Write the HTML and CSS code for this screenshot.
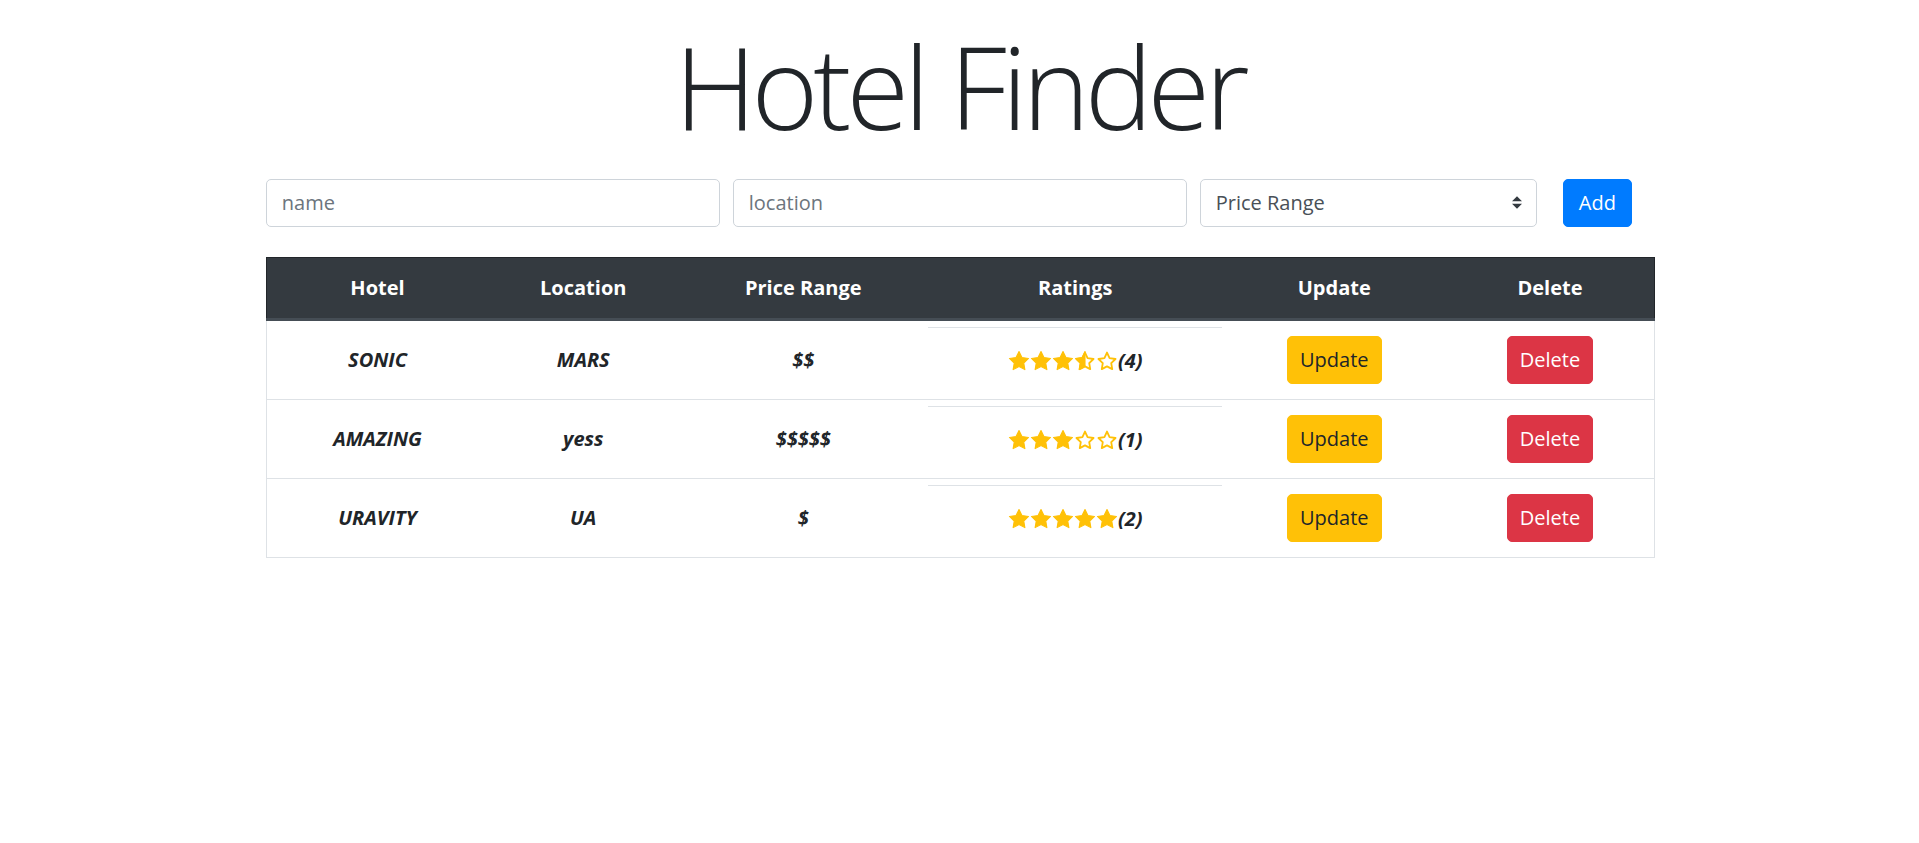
FILE: index.html
```html
<!DOCTYPE html>
<html lang="en">
<head>
<meta charset="utf-8">
<title>Hotel Finder</title>
<link rel="stylesheet" href="styles.css">
</head>
<body>
<div class="container">
  <h1 class="title">Hotel Finder</h1>
  <form class="add-form">
    <input class="field" type="text" placeholder="name">
    <input class="field" type="text" placeholder="location">
    <div class="select-wrap">
      <select class="field select">
        <option>Price Range</option>
        <option>$</option>
        <option>$$</option>
        <option>$$$</option>
        <option>$$$$</option>
        <option>$$$$$</option>
      </select>
      <svg class="select-arrow" viewBox="0 0 4 5" width="10" height="13"><path fill="#343a40" d="M2 0L0 2h4zm0 5L0 3h4z"/></svg>
    </div>
    <button type="button" class="btn btn-primary">Add</button>
  </form>

  <table class="hotels">
    <colgroup>
      <col class="c-hotel"><col class="c-loc"><col class="c-price"><col class="c-rate"><col class="c-upd"><col class="c-del">
    </colgroup>
    <thead>
      <tr><th>Hotel</th><th>Location</th><th>Price Range</th><th>Ratings</th><th>Update</th><th>Delete</th></tr>
    </thead>
    <tbody>
      <tr>
        <td class="em">SONIC</td>
        <td class="em">MARS</td>
        <td class="em">$$</td>
        <td class="rating"><span class="stars">
          <svg class="star" viewBox="0 0 24 24"><polygon class="full" points="12,1.6 15.2,8.2 22.4,9.2 17.2,14.2 18.4,21.4 12,18 5.6,21.4 6.8,14.2 1.6,9.2 8.8,8.2"/></svg>
          <svg class="star" viewBox="0 0 24 24"><polygon class="full" points="12,1.6 15.2,8.2 22.4,9.2 17.2,14.2 18.4,21.4 12,18 5.6,21.4 6.8,14.2 1.6,9.2 8.8,8.2"/></svg>
          <svg class="star" viewBox="0 0 24 24"><polygon class="full" points="12,1.6 15.2,8.2 22.4,9.2 17.2,14.2 18.4,21.4 12,18 5.6,21.4 6.8,14.2 1.6,9.2 8.8,8.2"/></svg>
          <svg class="star" viewBox="0 0 24 24"><polygon class="full" points="12,1.6 12,18 5.6,21.4 6.8,14.2 1.6,9.2 8.8,8.2"/><polygon class="empty" points="12,2.8 14.8,8.9 21.3,9.8 16.6,14.4 17.7,20.9 12,17.9 6.3,20.9 7.4,14.4 2.7,9.8 9.2,8.9"/></svg>
          <svg class="star" viewBox="0 0 24 24"><polygon class="empty" points="12,2.8 14.8,8.9 21.3,9.8 16.6,14.4 17.7,20.9 12,17.9 6.3,20.9 7.4,14.4 2.7,9.8 9.2,8.9"/></svg>
        </span><span class="count">(4)</span></td>
        <td><button type="button" class="btn btn-warning">Update</button></td>
        <td><button type="button" class="btn btn-danger">Delete</button></td>
      </tr>
      <tr>
        <td class="em">AMAZING</td>
        <td class="em">yess</td>
        <td class="em">$$$$$</td>
        <td class="rating"><span class="stars">
          <svg class="star" viewBox="0 0 24 24"><polygon class="full" points="12,1.6 15.2,8.2 22.4,9.2 17.2,14.2 18.4,21.4 12,18 5.6,21.4 6.8,14.2 1.6,9.2 8.8,8.2"/></svg>
          <svg class="star" viewBox="0 0 24 24"><polygon class="full" points="12,1.6 15.2,8.2 22.4,9.2 17.2,14.2 18.4,21.4 12,18 5.6,21.4 6.8,14.2 1.6,9.2 8.8,8.2"/></svg>
          <svg class="star" viewBox="0 0 24 24"><polygon class="full" points="12,1.6 15.2,8.2 22.4,9.2 17.2,14.2 18.4,21.4 12,18 5.6,21.4 6.8,14.2 1.6,9.2 8.8,8.2"/></svg>
          <svg class="star" viewBox="0 0 24 24"><polygon class="empty" points="12,2.8 14.8,8.9 21.3,9.8 16.6,14.4 17.7,20.9 12,17.9 6.3,20.9 7.4,14.4 2.7,9.8 9.2,8.9"/></svg>
          <svg class="star" viewBox="0 0 24 24"><polygon class="empty" points="12,2.8 14.8,8.9 21.3,9.8 16.6,14.4 17.7,20.9 12,17.9 6.3,20.9 7.4,14.4 2.7,9.8 9.2,8.9"/></svg>
        </span><span class="count">(1)</span></td>
        <td><button type="button" class="btn btn-warning">Update</button></td>
        <td><button type="button" class="btn btn-danger">Delete</button></td>
      </tr>
      <tr>
        <td class="em">URAVITY</td>
        <td class="em">UA</td>
        <td class="em">$</td>
        <td class="rating"><span class="stars">
          <svg class="star" viewBox="0 0 24 24"><polygon class="full" points="12,1.6 15.2,8.2 22.4,9.2 17.2,14.2 18.4,21.4 12,18 5.6,21.4 6.8,14.2 1.6,9.2 8.8,8.2"/></svg>
          <svg class="star" viewBox="0 0 24 24"><polygon class="full" points="12,1.6 15.2,8.2 22.4,9.2 17.2,14.2 18.4,21.4 12,18 5.6,21.4 6.8,14.2 1.6,9.2 8.8,8.2"/></svg>
          <svg class="star" viewBox="0 0 24 24"><polygon class="full" points="12,1.6 15.2,8.2 22.4,9.2 17.2,14.2 18.4,21.4 12,18 5.6,21.4 6.8,14.2 1.6,9.2 8.8,8.2"/></svg>
          <svg class="star" viewBox="0 0 24 24"><polygon class="full" points="12,1.6 15.2,8.2 22.4,9.2 17.2,14.2 18.4,21.4 12,18 5.6,21.4 6.8,14.2 1.6,9.2 8.8,8.2"/></svg>
          <svg class="star" viewBox="0 0 24 24"><polygon class="full" points="12,1.6 15.2,8.2 22.4,9.2 17.2,14.2 18.4,21.4 12,18 5.6,21.4 6.8,14.2 1.6,9.2 8.8,8.2"/></svg>
        </span><span class="count">(2)</span></td>
        <td><button type="button" class="btn btn-warning">Update</button></td>
        <td><button type="button" class="btn btn-danger">Delete</button></td>
      </tr>
    </tbody>
  </table>
</div>
</body>
</html>
```

FILE: styles.css
```css
* { box-sizing: border-box; }

html, body {
  margin: 0;
  padding: 0;
  background: #fff;
}

body {
  font-family: "Open Sans", "Noto Sans", "Liberation Sans", sans-serif;
  font-size: 20px;
  line-height: 1.5;
  color: #212529;
}

.container {
  width: 1425px;
  margin: 0 auto;
  padding: 0 18.75px;
}

.title {
  margin: 18px 0 0;
  font-size: 114px;
  font-weight: 300;
  line-height: 1.2;
  text-align: center;
  letter-spacing: -5px;
}

.add-form {
  display: grid;
  grid-template-columns: 454px 454px 337px auto;
  column-gap: 13px;
  align-items: center;
  margin: 24px 0 30px;
}

.field {
  display: block;
  width: 100%;
  height: 47.5px;
  padding: 7.5px 15px;
  font-family: inherit;
  font-size: 20px;
  line-height: 1.5;
  color: #495057;
  background: #fff;
  border: 1.25px solid #ced4da;
  border-radius: 5px;
  outline: none;
}

.field::placeholder {
  color: #6c757d;
  opacity: 1;
}

.select-wrap {
  position: relative;
}

.select {
  appearance: none;
  -webkit-appearance: none;
  padding-right: 40px;
}

.select-arrow {
  position: absolute;
  right: 15px;
  top: 17px;
  pointer-events: none;
}

.btn {
  display: inline-block;
  height: 48px;
  padding: 7.5px 15px;
  font-family: inherit;
  font-size: 20px;
  line-height: 1.5;
  font-weight: 400;
  border: 1.25px solid transparent;
  border-radius: 5px;
  cursor: pointer;
}

.btn-primary {
  justify-self: start;
  margin-left: 13px;
  color: #fff;
  background: #007bff;
  border-color: #007bff;
}

.btn-warning {
  padding: 7.5px 12px;
  color: #212529;
  background: #ffc107;
  border-color: #ffc107;
}

.btn-danger {
  padding: 7.5px 12px;
  color: #fff;
  background: #dc3545;
  border-color: #dc3545;
}

.hotels {
  width: 100%;
  table-layout: fixed;
  border-collapse: collapse;
  border: 1px solid #dee2e6;
  text-align: center;
}

.c-hotel { width: 222px; }
.c-loc { width: 190px; }
.c-price { width: 250px; }
.c-rate { width: 294px; }
.c-upd { width: 224px; }
.c-del { width: 208px; }

.hotels th {
  padding: 15px;
  font-weight: 700;
  color: #fff;
  background: #343a40;
  border-top: 1px solid #212529;
  border-bottom: 3px solid #454d55;
  vertical-align: bottom;
}

.hotels thead tr th:first-child { border-left: 1px solid #212529; }
.hotels thead tr th:last-child { border-right: 1px solid #212529; }

.hotels td {
  padding: 15px;
  border-top: 1px solid #dee2e6;
  vertical-align: middle;
}

.hotels td.em {
  font-weight: 700;
  font-style: italic;
}

.hotels td.rating {
  position: relative;
  white-space: nowrap;
}

.hotels td.rating::before {
  content: "";
  position: absolute;
  left: 0;
  right: 0;
  top: 6px;
  height: 1.5px;
  background: #dee2e6;
}

.stars {
  display: inline-flex;
  vertical-align: middle;
  gap: 0;
}

.star {
  width: 22px;
  height: 22px;
  display: block;
}

.star .full {
  fill: #ffc107;
  stroke: #ffc107;
  stroke-width: 1.2;
  stroke-linejoin: round;
}

.star .empty {
  fill: none;
  stroke: #ffc107;
  stroke-width: 2;
  stroke-linejoin: round;
}

.count {
  font-weight: 700;
  font-style: italic;
  vertical-align: middle;
}
```
